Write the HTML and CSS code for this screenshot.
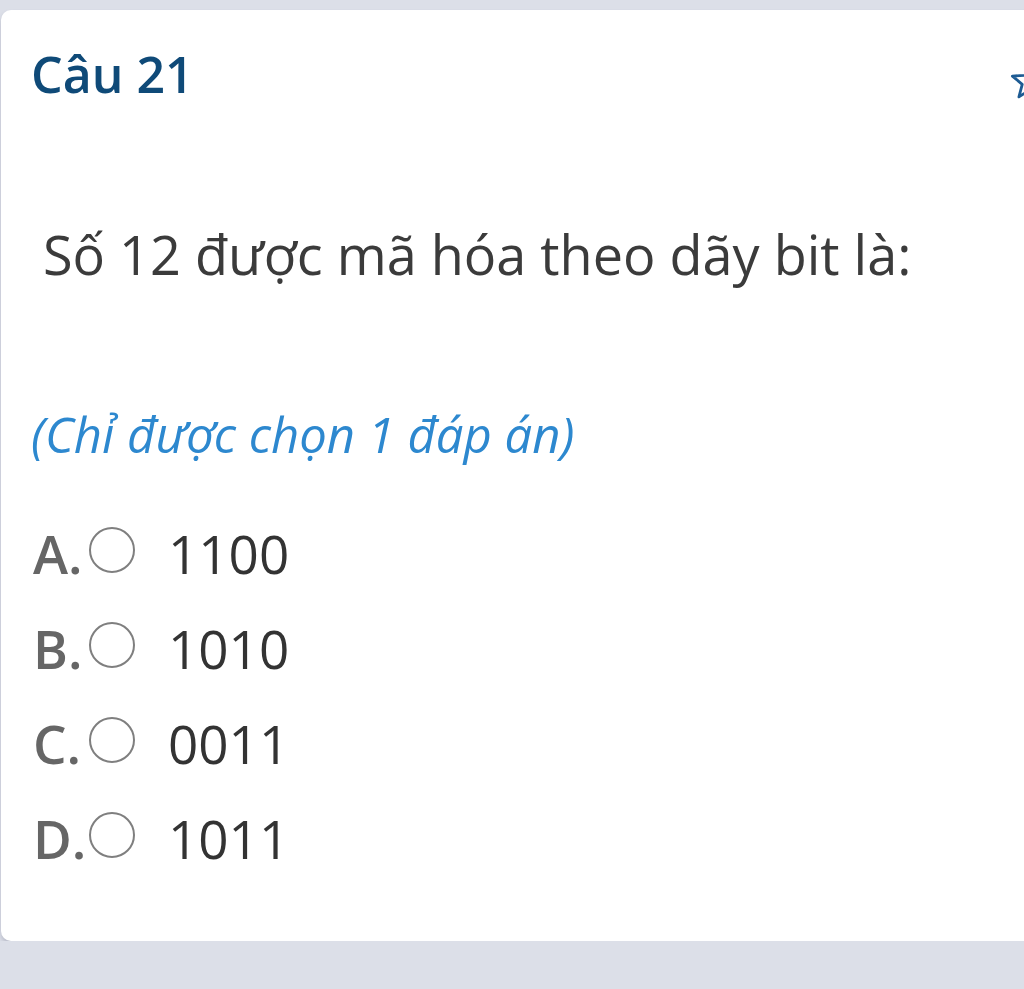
FILE: index.html
```html
<!DOCTYPE html>
<html lang="vi">
<head>
<meta charset="utf-8">
<meta name="viewport" content="width=device-width, initial-scale=1.0">
<title>Câu 21</title>
<link rel="stylesheet" href="styles.css">
</head>
<body>
	<div class="card">
		<div class="card-head">
			<h1 class="q-title">Câu 21</h1>
			<svg class="star" width="40" height="40" viewBox="0 0 34 34">
				<polygon points="17,2 21.2,12.2 32,12.8 23.6,19.8 26.4,30.5 17,24.6 7.6,30.5 10.4,19.8 2,12.8 12.8,12.2" fill="none" stroke="#1d5b93" stroke-width="2.4" stroke-linejoin="round"/>
			</svg>
		</div>

		<p class="q-text">Số 12 được mã hóa theo dãy bit là:</p>

		<p class="q-hint">(Chỉ được chọn 1 đáp án)</p>

		<ul class="answers">
			<li class="answer"><span class="letter">A.</span><span class="radio"></span><span class="value">1100</span></li>
			<li class="answer"><span class="letter">B.</span><span class="radio"></span><span class="value">1010</span></li>
			<li class="answer"><span class="letter">C.</span><span class="radio"></span><span class="value">0011</span></li>
			<li class="answer"><span class="letter">D.</span><span class="radio"></span><span class="value">1011</span></li>
		</ul>
	</div>
</body>
</html>
```

FILE: styles.css
```css
*{
	box-sizing: border-box;
	margin: 0;
	padding: 0;
}

body{
	background: #dcdfe8;
	font-family: "Open Sans", "Noto Sans", sans-serif;
	overflow: hidden;
	padding-top: 10px;
}

.card{
	background: #ffffff;
	width: 1060px;
	margin-left: 1px;
	border-radius: 10px;
	box-shadow: 0 3px 4px rgba(60, 64, 90, 0.22);
	padding: 34px 0 72px 30px;
}

.card-head{
	display: flex;
	align-items: flex-start;
	justify-content: space-between;
	padding-right: 11px;
}

.q-title{
	font-size: 50px;
	line-height: 60px;
	font-weight: 600;
	color: #0f4a78;
}

.star{
	display: block;
	margin-top: 17px;
}

.q-text{
	margin-top: 120px;
	padding-left: 12px;
	font-size: 54px;
	line-height: 60px;
	color: #3b3b3b;
}

.q-hint{
	margin-top: 122px;
	font-size: 49px;
	line-height: 56px;
	font-style: italic;
	color: #2d88cf;
}

.answers{
	list-style: none;
	margin-top: 62px;
	display: flex;
	flex-direction: column;
	gap: 35px;
}

.answer{
	display: flex;
	align-items: flex-start;
	font-size: 53px;
	line-height: 60px;
}

.letter{
	width: 58px;
	padding-left: 2px;
	font-weight: 600;
	color: #666666;
}

.radio{
	width: 46px;
	height: 46px;
	margin-top: 3px;
	border: 2px solid #7f7f7f;
	border-radius: 50%;
	flex-shrink: 0;
}

.value{
	margin-left: 33px;
	color: #333333;
}
```
